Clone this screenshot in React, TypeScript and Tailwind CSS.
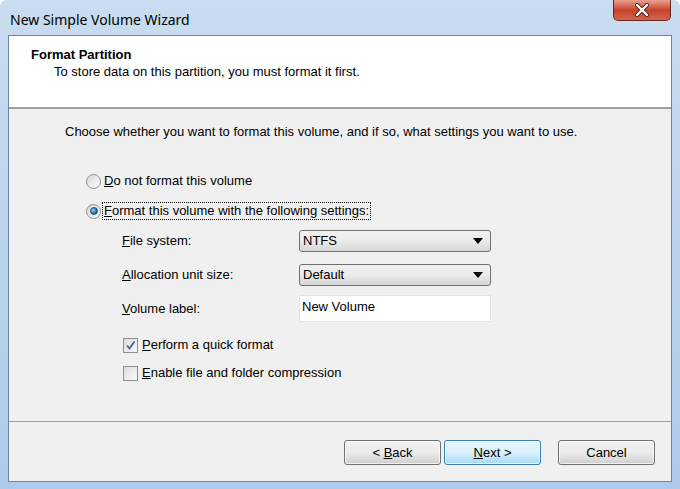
import React from 'react'

const ui = { fontFamily: '"Liberation Sans", Arial, sans-serif' }

function Radio({ checked }: { checked?: boolean }) {
  return (
    <span className="flex h-[15px] w-[15px] items-center justify-center rounded-full border border-[#8e8f8f] bg-gradient-to-br from-[#d6d6d6] to-[#ffffff]">
      {checked && (
        <span className="h-[8px] w-[8px] rounded-full border border-[#1a4a74] bg-[radial-gradient(circle_at_35%_35%,#9fd6f7,#2a6fae_60%,#0d3b66)]" />
      )}
    </span>
  )
}

function Checkbox({ checked }: { checked?: boolean }) {
  return (
    <span className="flex h-[15px] w-[15px] items-center justify-center border border-[#8e8f8f] bg-gradient-to-br from-[#dcdcdc] to-[#fafafa]">
      {checked && (
        <svg width="11" height="11" viewBox="0 0 11 11">
          <path d="M2 5.5 L4.5 8.5 L9.5 1.5" fill="none" stroke="#4a5f97" strokeWidth="1.8" />
        </svg>
      )}
    </span>
  )
}

function Combo({ value }: { value: string }) {
  return (
    <div className="flex h-[22px] w-[192px] items-center justify-between rounded-[3px] border border-[#707070] bg-gradient-to-b from-[#f2f2f2] via-[#ebebeb] to-[#d6d6d6] pl-[3px] pr-[7px] text-[13px] text-black">
      <span>{value}</span>
      <svg width="10" height="6" viewBox="0 0 10 6">
        <path d="M0 0 H10 L5 6 Z" fill="#000" />
      </svg>
    </div>
  )
}

function Button({ children, primary }: { children: React.ReactNode; primary?: boolean }) {
  return (
    <button
      className={
        primary
          ? 'flex h-[25px] w-[97px] items-center justify-center rounded-[3px] border border-[#3c7fb1] bg-gradient-to-b from-[#eaf6fd] via-[#d9f0fc] to-[#a7d9f5] text-[13px] text-black shadow-[inset_0_0_0_1px_#ffffffaa]'
          : 'flex h-[25px] w-[97px] items-center justify-center rounded-[3px] border border-[#707070] bg-gradient-to-b from-[#f2f2f2] via-[#ebebeb] to-[#cfcfcf] text-[13px] text-black shadow-[inset_0_0_0_1px_#ffffffaa]'
      }
    >
      <span>{children}</span>
    </button>
  )
}

export default function App() {
  return (
    <div
      className="flex h-[489px] w-[680px] flex-col overflow-hidden rounded-t-[6px] bg-gradient-to-b from-[#c9dcf0] via-[#bcd3ec] to-[#aecbea]"
      style={ui}
    >
      {/* Title bar */}
      <div className="flex h-[35px] shrink-0 items-start justify-between">
        <div className="pl-[10px] pt-[9px] text-[14px] text-black" style={{ fontFamily: '"Noto Sans", "Open Sans", sans-serif' }}>
          New Simple Volume Wizard
        </div>
        <div className="mr-[9px] flex h-[21px] w-[58px] items-center justify-center rounded-b-[5px] border border-t-0 border-[#6d2a22] bg-gradient-to-b from-[#e8a08f] via-[#c7412b] to-[#d2654a]">
          <svg width="16" height="14" viewBox="0 0 16 14">
            <path d="M3 2 L13 12 M13 2 L3 12" stroke="#5a1e16" strokeWidth="4" strokeLinecap="round" />
            <path d="M3 2 L13 12 M13 2 L3 12" stroke="#ffffff" strokeWidth="2.4" strokeLinecap="round" />
          </svg>
        </div>
      </div>

      {/* Client area */}
      <div className="mx-[8px] mb-[7px] flex flex-1 flex-col border border-[#6b86a6] bg-[#f0f0f0]">
        {/* Header */}
        <div className="flex h-[73px] shrink-0 flex-col border-b-2 border-b-[#a0a0a0] bg-white pl-[22px] pt-[10px]">
          <div className="text-[13px] font-bold leading-[18px] text-black">Format Partition</div>
          <div className="pl-[23px] text-[13px] leading-[16px] text-black">
            To store data on this partition, you must format it first.
          </div>
        </div>

        {/* Body */}
        <div className="flex flex-1 flex-col pl-[56px] pt-[15px] text-[13px] leading-[16px] text-black">
          <div>Choose whether you want to format this volume, and if so, what settings you want to use.</div>

          <div className="mt-[33px] flex items-center gap-[3px] pl-[21px]">
            <Radio />
            <span>
              <u>D</u>o not format this volume
            </span>
          </div>

          <div className="mt-[13px] flex items-center gap-[1px] pl-[21px]">
            <Radio checked />
            <span className="border border-dotted border-black px-[1px]">
              <u>F</u>ormat this volume with the following settings:
            </span>
          </div>

          <div className="mt-[10px] flex flex-col pl-[57px]">
            <div className="flex items-center">
              <span className="w-[177px]">
                <u>F</u>ile system:
              </span>
              <Combo value="NTFS" />
            </div>
            <div className="mt-[12px] flex items-center">
              <span className="w-[177px]">
                <u>A</u>llocation unit size:
              </span>
              <Combo value="Default" />
            </div>
            <div className="mt-[9px] flex items-center">
              <span className="w-[177px]">
                <u>V</u>olume label:
              </span>
              <div className="h-[27px] w-[192px] border border-[#e3e3e3] bg-white pl-[2px] pt-[3px]">New Volume</div>
            </div>
          </div>

          <div className="mt-[15px] flex flex-col gap-[12px] pl-[58px]">
            <div className="flex items-center gap-[4px]">
              <Checkbox checked />
              <span>
                <u>P</u>erform a quick format
              </span>
            </div>
            <div className="flex items-center gap-[4px]">
              <Checkbox />
              <span>
                <u>E</u>nable file and folder compression
              </span>
            </div>
          </div>
        </div>

        {/* Footer */}
        <div className="flex h-[60px] shrink-0 items-start justify-end gap-[3px] border-t border-t-[#a0a0a0] pr-[16px] pt-[18px]">
          <Button>
            &lt; <u>B</u>ack
          </Button>
          <Button primary>
            <u>N</u>ext &gt;
          </Button>
          <div className="w-[11px]" />
          <Button>Cancel</Button>
        </div>
      </div>
    </div>
  )
}
